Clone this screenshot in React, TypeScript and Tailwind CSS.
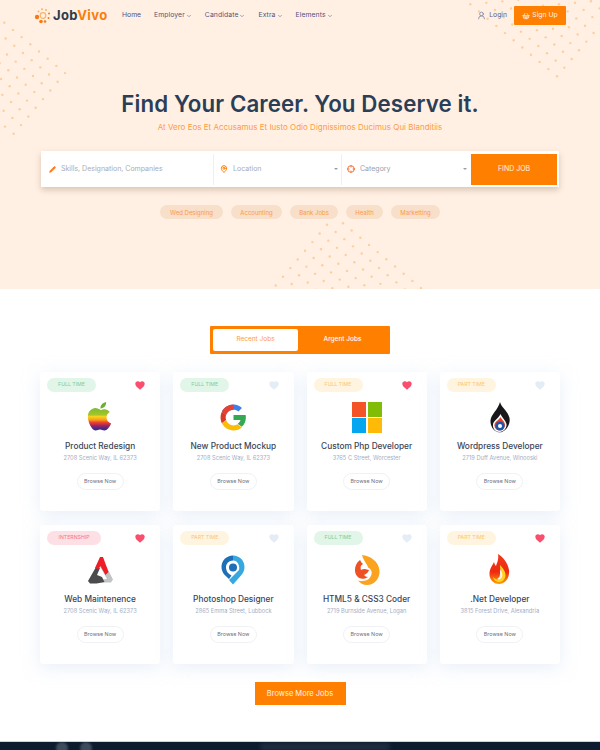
import React from 'react';
import { ChevronDown, ShoppingBasket, UserRound, Pencil, MapPin, Crosshair } from 'lucide-react';

type Job = {
  type: 'full' | 'fullYellow' | 'part' | 'intern';
  liked: boolean;
  title: string;
  address: string;
  logo: React.ReactNode;
};

const badgeStyles = {
  full: { label: 'FULL TIME', cls: 'w-[49px] bg-[#e2f5e9] text-[#7ccb97]' },
  fullYellow: { label: 'FULL TIME', cls: 'w-[49px] bg-[#fff4e0] text-[#fbc66f]' },
  part: { label: 'PART TIME', cls: 'w-[49px] bg-[#fff4e0] text-[#fbc66f]' },
  intern: { label: 'INTERNSHIP', cls: 'w-[54px] bg-[#fde0e5] text-[#f8728b]' },
};

function AppleLogo() {
  return (
    <svg viewBox="0 0 30 32" className="h-[32px] w-[28px]">
      <defs>
        <linearGradient id="rainbow" x1="0" y1="0" x2="0" y2="1">
          <stop offset="0" stopColor="#7dbb2e" />
          <stop offset="0.3" stopColor="#a5c52a" />
          <stop offset="0.38" stopColor="#fbd31c" />
          <stop offset="0.52" stopColor="#f7a11d" />
          <stop offset="0.64" stopColor="#e8442a" />
          <stop offset="0.78" stopColor="#a3225f" />
          <stop offset="0.9" stopColor="#4a2a86" />
          <stop offset="1" stopColor="#3b2a7c" />
        </linearGradient>
      </defs>
      <path d="M15 8c-2-1.200-4-1.800-6-1.500C5 7.200 2 10.500 2 15.500c0 6 4 14.500 8 15 2 .2 3-1 5-1s3 1.200 5 1c2.500-.2 5-3 7-7.500-3-1-5-3.500-5-6.500 0-2.500 1.500-4.500 3.500-5.800-1.500-2-4-3.300-6.500-3-1.800.2-3 1.300-4 .8z" fill="url(#rainbow)" />
      <path d="M15.500 7c-.2-3.500 2-6 6-7 .3 4-2 6.500-6 7z" fill="#6fae2c" />
    </svg>
  );
}

function GoogleLogo() {
  return (
    <svg viewBox="0 0 48 48" className="h-[27px] w-[27px]">
      <path d="M24 10c3.500 0 6.400 1.200 8.700 3.300l6.300-6.300C35 3.400 30 1 24 1 15 1 7.200 6.200 3.400 13.700l7.400 5.700C12.600 14 17.800 10 24 10z" fill="#3f7fe8" />
      <path d="M24 10c-6.200 0-11.400 4-13.200 9.400l-7.400-5.700C7.200 6.200 15 1 24 1z" fill="#e8412f" />
      <path d="M10.800 28.600c-.5-1.400-.7-3-.7-4.600s.2-3.200.7-4.600l-7.400-5.700C1.900 16.800 1 20.300 1 24s.9 7.200 2.400 10.300z" fill="#d93a26" />
      <path d="M24 47c6 0 11-2 14.700-5.400l-7.200-5.600c-2 1.300-4.500 2-7.500 2-6.200 0-11.400-4-13.200-9.400l-7.400 5.700C7.200 41.800 15 47 24 47z" fill="#fbbc05" />
      <path d="M46 24c0-1.500-.2-3-.5-4.400H24v9h12.400c-.6 2.800-2.300 5-4.900 6.400l7.200 5.600C43.200 36.400 46 30.800 46 24z" fill="#34a853" />
    </svg>
  );
}

function MicrosoftLogo() {
  return (
    <svg viewBox="0 0 30 31" className="h-[31px] w-[30px]">
      <rect x="0" y="0" width="14" height="15" fill="#f35325" />
      <rect x="16" y="0" width="14" height="15" fill="#81bc06" />
      <rect x="0" y="16" width="14" height="15" fill="#05a6f0" />
      <rect x="16" y="16" width="14" height="15" fill="#ffba08" />
    </svg>
  );
}

function InkFlameLogo() {
  return (
    <svg viewBox="0 0 20 31" className="h-[31px] w-[20px]">
      <path d="M10 0c1 5 8 9 9.500 16 1 6-2.500 12-7.500 14-1 .3-3 .3-4.500 0C3 28.500.2 23.500.5 18.500 1 12 8 8 10 0z" fill="#17171b" />
      <path d="M10.500 12c1 3 5 6 6 10 .5 4-3 8-7 8s-7-3.500-6.500-7.500C3.500 18.500 8 17 10.500 12z" fill="#fff" />
      <path d="M10.500 15c1 2.500 4 4 4.500 7.500.3 3-2.500 6-5.500 6s-5.500-3-5-6c.5-3 4.500-4.500 6-7.500z" fill="#e8402c" />
      <circle cx="10" cy="24" r="4.500" fill="#1a57a8" />
      <circle cx="10" cy="24" r="2" fill="#fff" />
    </svg>
  );
}

function TriangleLogo() {
  return (
    <svg viewBox="0 0 27 27" className="h-[27px] w-[27px]">
      <path d="M15 1l11 21.500-2 3H12l3-3 5-.5-5-9-2-3z" fill="#c2c3c5" />
      <path d="M1 24L9 10l4 1-3 7 5 2 2.500 5-8 1.500H3z" fill="#4b4b4d" />
      <path d="M13 0h3l5.500 15-3 3-5-9-2 3-3.500-1z" fill="#f01c26" />
    </svg>
  );
}

function PinLogo() {
  return (
    <svg viewBox="0 0 24 30" className="h-[30px] w-[24px]">
      <path d="M12 .5C5.500.5.500 5.500.500 12c0 3.500 1.500 6.500 4 8.700L8 24l2.500-3.500C7 19 5 16 5 12.500 5 8.500 8 5.500 12 5.500z" fill="#1d70b8" />
      <path d="M12 .5c6.500 0 11.500 5 11.500 11.500 0 3.500-1.500 6.300-3.500 8.500L12 29.500 8 25l10-10c1-3-.5-9.500-6-9.500z" fill="#35a8e0" />
      <circle cx="12" cy="12.500" r="4" fill="#1d70b8" />
    </svg>
  );
}

function FoxLogo() {
  return (
    <svg viewBox="0 0 26 30" className="h-[30px] w-[26px]">
      <path d="M8 0c8 1 17 6 17.500 16 .3 8-5.500 14-12.500 14-4 0-7-1.800-9-4.500 4 1 9 1 12-3 3-4 2-8-2-10C14 10 10 7 8 0z" fill="#fba31e" />
      <path d="M6 5c1 2 2 3 3 4-2 1-3 3-2 6 1-1 3-1 4-1 2 0 2 1 4 1-1 3-3 4-5 5 1 1 2 2 4 2-4 3-9 2-11-1C-.500 17 .500 9 6 5z" fill="#ee5224" />
    </svg>
  );
}

function FireLogo() {
  return (
    <svg viewBox="0 0 22 32" className="h-[32px] w-[22px]">
      <defs>
        <linearGradient id="fire" x1="0" y1="0" x2="0" y2="1">
          <stop offset="0" stopColor="#f03a1c" />
          <stop offset="0.6" stopColor="#ee2a12" />
          <stop offset="1" stopColor="#ffa200" />
        </linearGradient>
      </defs>
      <path d="M9 0c5 3 10 9 11 16 1 8-4 14-10 14S0 25 .500 19C1 14 3 12 5 8c.5 2 1 3 2 4 1-3 3-7 2-12z" fill="url(#fire)" />
      <path d="M11 11c3 3 6 7 5.500 11-.5 3-3 6-6 6-3 0-6-2-6.500-5 2 2 4 3 6 2s3-4 2-7c-.5-2-1-4-1-7z" fill="#ffd21e" />
      <path d="M11 15c2 3 3 6 2 8s-3 3-5 2c2-1 3-3 3-5z" fill="#fff" opacity="0.9" />
    </svg>
  );
}

const jobs: Job[] = [
  { type: 'full', liked: true, title: 'Product Redesign', address: '2708 Scenic Way, IL 62373', logo: <AppleLogo /> },
  { type: 'full', liked: false, title: 'New Product Mockup', address: '2708 Scenic Way, IL 62373', logo: <GoogleLogo /> },
  { type: 'fullYellow', liked: true, title: 'Custom Php Developer', address: '3765 C Street, Worcester', logo: <MicrosoftLogo /> },
  { type: 'part', liked: false, title: 'Wordpress Developer', address: '2719 Duff Avenue, Winooski', logo: <InkFlameLogo /> },
  { type: 'intern', liked: true, title: 'Web Maintenence', address: '2708 Scenic Way, IL 62373', logo: <TriangleLogo /> },
  { type: 'part', liked: false, title: 'Photoshop Designer', address: '2865 Emma Street, Lubbock', logo: <PinLogo /> },
  { type: 'full', liked: false, title: 'HTML5 & CSS3 Coder', address: '2719 Burnside Avenue, Logan', logo: <FoxLogo /> },
  { type: 'part', liked: true, title: '.Net Developer', address: '3815 Forest Drive, Alexandria', logo: <FireLogo /> },
];

const tags = [
  { label: 'Wed Designing', w: 'w-[63px]' },
  { label: 'Accounting', w: 'w-[51px]' },
  { label: 'Bank Jobs', w: 'w-[48px]' },
  { label: 'Health', w: 'w-[37px]' },
  { label: 'Marketting', w: 'w-[49px]' },
];

// dot fields in the hero, all on the same skewed lattice
function dotField(ox: number, oy: number, iFrom: number, iTo: number, jFrom: number, jTo: number) {
  const dots: { x: number; y: number }[] = [];
  for (let i = iFrom; i <= iTo; i++) {
    for (let j = jFrom; j <= jTo; j++) {
      dots.push({ x: ox + i * 8.67 - j * 7.33, y: oy + i * 7.2 + j * 8.67 });
    }
  }
  return dots;
}

const heroDots = [
  ...dotField(4.3, 22.7, 0, 7, 0, 7),
  ...dotField(557, 76.3, -12, 0, -8, 0),
  ...dotField(343, 223.3, 0, 9, 0, 8),
  ...dotField(343, 223.3, -1, -1, 1, 8),
];

function Heart({ liked }: { liked: boolean }) {
  return (
    <svg viewBox="0 0 24 22" className="h-[9px] w-[10px]">
      <path
        d="M12 21.500C5 16 .500 12 .500 7 .500 3.200 3.300.500 6.800.500c2.100 0 4 1 5.200 2.800C13.200 1.500 15.100.500 17.200.500c3.500 0 6.300 2.700 6.300 6.500 0 5-4.500 9-11.500 14.500z"
        fill={liked ? '#fb4d6d' : '#e4ecf5'}
      />
    </svg>
  );
}

function JobCard({ job }: { job: Job }) {
  const badge = badgeStyles[job.type];
  return (
    <div className="flex h-[139px] flex-col items-center rounded-[3px] bg-white shadow-[0_4px_18px_rgba(190,210,235,0.35)]">
      <div className="flex w-full items-center justify-between pl-[7px] pr-[15px] pt-[6px]">
        <span className={`flex h-[14px] items-center justify-center rounded-full text-[5.200px] ${badge.cls}`}>
          {badge.label}
        </span>
        <Heart liked={job.liked} />
      </div>
      <div className="mt-[9px] flex h-[32px] items-center justify-center">{job.logo}</div>
      <h3 className="mt-[6px] text-[8.300px] font-medium leading-[14px] text-[#3a4558]">{job.title}</h3>
      <p className="text-[5.700px] leading-[9px] text-[#a4aec4]">{job.address}</p>
      <button className="mt-[11px] h-[17px] w-[47px] rounded-full border border-[#f0f1f5] bg-white text-[5.400px] text-[#6e6f80]">
        Browse Now
      </button>
    </div>
  );
}

export default function App() {
  return (
    <div className="bg-white font-['Inter','Liberation_Sans',sans-serif]">
      <section className="relative h-[289px] overflow-hidden bg-[#fff0e3]">
        <svg className="absolute left-0 top-0 h-[289px] w-[600px]" viewBox="0 0 600 289">
          {heroDots.map((d, i) => (
            <circle key={i} cx={d.x} cy={d.y} r="1.200" fill="#fccf9f" />
          ))}
        </svg>

        <header className="relative flex h-[25px] items-center justify-between pl-[34px] pr-[34px] pt-[6px]">
          <div className="flex items-center">
            <div className="flex w-[88px] items-center">
              <svg viewBox="0 0 17 16" className="h-[16px] w-[17px]">
                <circle cx="3" cy="9" r="2.200" fill="#f97a12" />
                <circle cx="7" cy="13.500" r="1.800" fill="#f97a12" />
                <circle cx="11" cy="13.500" r="1.300" fill="#f97a12" />
                <circle cx="14.500" cy="10" r="1" fill="#f97a12" />
                <circle cx="15" cy="5.500" r="1" fill="#f97a12" />
                <circle cx="12" cy="2" r="1" fill="#fbb26a" />
                <circle cx="8" cy="1.200" r="1" fill="#fbb26a" />
                <circle cx="4.500" cy="3.500" r="1" fill="#fbb26a" />
                <circle cx="9" cy="7.500" r="2.800" fill="none" stroke="#fbb26a" strokeWidth="1.200" />
              </svg>
              <span className="ml-[2px] text-[13px] font-bold tracking-[0.4px] text-[#2e3a4a]">
                Job<span className="text-[#fa7d0c]">Vivo</span>
              </span>
            </div>
            <nav className="flex items-center gap-[13px] text-[6.800px] text-[#4f5480]">
              <span>Home</span>
              <span className="flex items-center gap-[1px] tracking-[0.1px]">Employer <ChevronDown size={6} /></span>
              <span className="flex items-center gap-[1px] tracking-[0.1px]">Candidate <ChevronDown size={6} /></span>
              <span className="flex items-center gap-[1px] tracking-[0.1px]">Extra <ChevronDown size={6} /></span>
              <span className="flex items-center gap-[1px] tracking-[0.1px]">Elements <ChevronDown size={6} /></span>
            </nav>
          </div>
          <div className="flex items-center">
            <UserRound size={9} className="text-[#7a7f9e]" />
            <span className="ml-[3px] text-[6.800px] text-[#5a5f85]">Login</span>
            <button className="ml-[7px] flex h-[19px] w-[52px] items-center justify-center gap-[2px] rounded-[1px] bg-[#ff7f00] text-[6.800px] text-[#fff3e3]">
              <ShoppingBasket size={8} /> Sign Up
            </button>
          </div>
        </header>

        <div className="relative flex flex-col items-center">
          <h1 className="mt-[63px] text-[22.300px] font-semibold leading-[32px] tracking-[0.1px] text-[#2b3e57]">
            Find Your Career. You Deserve it.
          </h1>
          <p className="text-[8px] leading-[14px] text-[#ff9a45]">
            At Vero Eos Et Accusamus Et Iusto Odio Dignissimos Ducimus Qui Blanditiis
          </p>
          <div className="mt-[17px] flex h-[36px] w-[518px] items-center bg-white shadow-[0_3px_6px_rgba(120,90,60,0.28)]">
            <div className="flex h-[31px] w-[173px] items-center gap-[5px] border-r border-[#eef0f4] pl-[8px]">
              <Pencil size={7} fill="#ff7a1a" className="text-[#ff7a1a]" />
              <span className="text-[7px] text-[#a9acb4]">Skills, Designation, Companies</span>
            </div>
            <div className="flex h-[31px] w-[128px] items-center gap-[5px] border-r border-[#eef0f4] pl-[6px] pr-[3px]">
              <MapPin size={8} strokeWidth={3} className="text-[#ff7f00]" />
              <span className="flex-1 text-[7px] text-[#a9acb4]">Location</span>
              <span className="border-x-[2px] border-t-[2px] border-x-transparent border-t-[#9a9ea8]" />
            </div>
            <div className="flex h-[31px] w-[128px] items-center gap-[5px] pl-[5px] pr-[3px]">
              <Crosshair size={8} strokeWidth={3} className="text-[#f4733a]" />
              <span className="flex-1 text-[7px] text-[#9aa0aa]">Category</span>
              <span className="border-x-[2px] border-t-[2px] border-x-transparent border-t-[#9a9ea8]" />
            </div>
            <button className="ml-[1px] h-[31px] w-[86px] bg-[#ff7f00] text-[7px] text-[#fff3e3]">FIND JOB</button>
          </div>
          <div className="mt-[18px] flex gap-[8px]">
            {tags.map((t) => (
              <span
                key={t.label}
                className={`flex h-[14px] items-center justify-center rounded-full bg-[#f8dfc9] text-[6px] text-[#fa9a4b] ${t.w}`}
              >
                {t.label}
              </span>
            ))}
          </div>
        </div>
      </section>

      <section className="flex flex-col items-center px-[40px] pb-[36px] pt-[37px]">
        <div className="flex h-[28px] w-[180px] items-center rounded-[1px] bg-[#ff7f00] p-[3px]">
          <div className="flex h-[22px] w-[85px] items-center justify-center rounded-[2px] bg-white text-[6.500px] text-[#ff9a45]">
            Recent Jobs
          </div>
          <div className="flex flex-1 items-center justify-center text-[6.500px] font-medium text-white">
            Argent Jobs
          </div>
        </div>
        <div className="mt-[18px] grid w-[520px] grid-cols-4 gap-x-[13px] gap-y-[14px]">
          {jobs.map((job) => (
            <JobCard key={job.title} job={job} />
          ))}
        </div>
        <button className="mt-[18px] h-[23px] w-[91px] bg-[#ff7f00] text-[7.500px] text-[#fff3e3]">Browse More Jobs</button>
      </section>

      <footer className="relative h-[9px] overflow-hidden border-t border-[#cfd2d8] bg-[#0d1b2e]">
        <span className="absolute left-[56px] top-[0px] h-[12px] w-[12px] rounded-full bg-[#6c7e8c]/50 blur-[1px]" />
        <span className="absolute left-[80px] top-[0px] h-[12px] w-[12px] rounded-full bg-[#6c7e8c]/50 blur-[1px]" />
        <span className="absolute left-[260px] top-[1px] h-[8px] w-[130px] rounded-full bg-[#45566a]/30 blur-[2px]" />
      </footer>
    </div>
  );
}
